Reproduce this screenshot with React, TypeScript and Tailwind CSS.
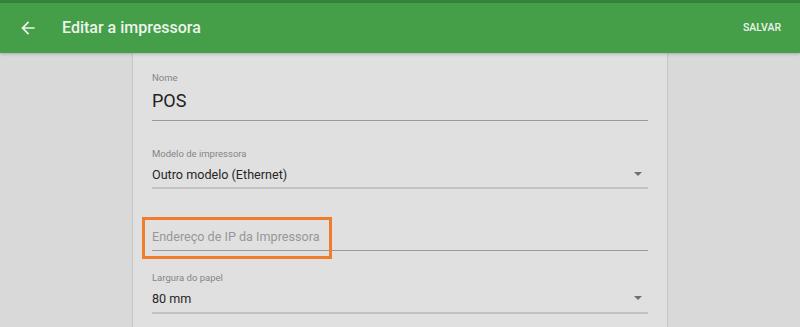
const font = "font-['Roboto','Liberation_Sans',sans-serif]";

function ArrowBack() {
  return (
    <svg viewBox="0 0 24 24" className="h-5 w-5 fill-[#eef3ee]">
      <path d="M20 11H7.83l5.59-5.59L12 4l-8 8 8 8 1.41-1.41L7.83 13H20v-2z" />
    </svg>
  );
}

function Caret() {
  return (
    <span className="mr-[6px] mb-[2px] h-0 w-0 border-x-[4px] border-t-[4px] border-x-transparent border-t-[#6f6f6f]" />
  );
}

export default function App() {
  return (
    <div className={`${font} flex h-[327px] w-[800px] flex-col overflow-hidden bg-[#d9d9d9]`}>
      <div className="h-[3px] bg-[#36853a]" />
      <header className="relative z-10 flex h-[50px] items-center bg-[#449f48] pl-[18px] pr-[19px] shadow-[0_1px_3px_rgba(0,0,0,0.22)]">
        <ArrowBack />
        <h1 className="ml-[24px] text-[16px] font-medium text-[#eef3ee]">Editar a impressora</h1>
        <button className="ml-auto text-[10.5px] font-medium text-[#eef3ee]">SALVAR</button>
      </header>

      <main className="flex flex-1 justify-center">
        <section className="w-[534px] bg-[#e0e0e0] px-[19px] pt-[19px] shadow-[0_0_2px_rgba(0,0,0,0.25)]">
          {/* Nome */}
          <div className="border-b border-[#9a9a9a] pb-[7px]">
            <p className="text-[9.5px] leading-[12px] text-[#858585]">Nome</p>
            <p className="mt-[5px] text-[18px] leading-[24px] text-[#222]">POS</p>
          </div>

          {/* Modelo */}
          <div className="mt-[27px] border-b-2 border-[#c2c2c2] pb-[4px]">
            <p className="text-[9.5px] leading-[12px] text-[#858585]">Modelo de impressora</p>
            <div className="mt-[7px] flex items-center justify-between">
              <span className="text-[12.6px] leading-[16px] text-[#262626]">Outro modelo (Ethernet)</span>
              <Caret />
            </div>
          </div>

          {/* IP */}
          <div className="relative mt-[40px] border-b border-[#9a9a9a] pb-[5px]">
            <p className="text-[12.6px] leading-[16px] text-[#979797]">Endereço de IP da Impressora</p>
            <div className="absolute left-[-10px] top-[-12px] h-[42px] w-[190px] border-[3px] border-[#f07d2c]" />
          </div>

          {/* Largura */}
          <div className="mt-[21px] border-b-2 border-[#c2c2c2] pb-[5px]">
            <p className="text-[9.5px] leading-[12px] text-[#858585]">Largura do papel</p>
            <div className="mt-[7px] flex items-center justify-between">
              <span className="text-[12.6px] leading-[16px] text-[#262626]">80 mm</span>
              <Caret />
            </div>
          </div>
        </section>
      </main>
    </div>
  );
}
